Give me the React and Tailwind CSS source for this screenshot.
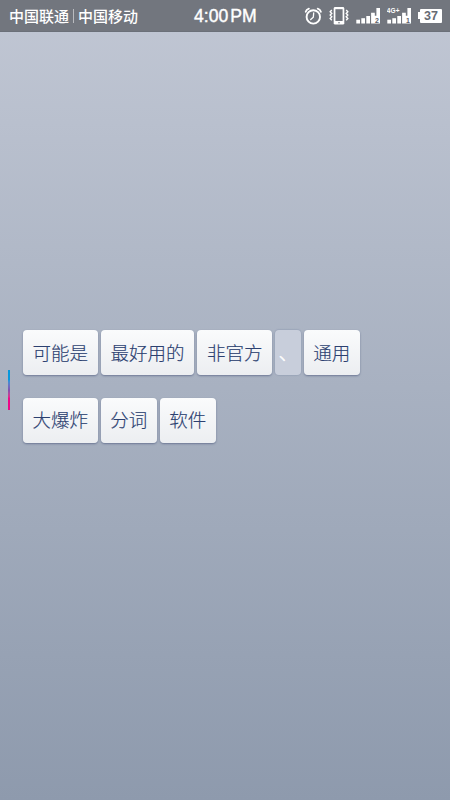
const ROWS = [
  [
    { text: '可能是', width: 'w-[75px]' },
    { text: '最好用的', width: 'w-[93.5px]' },
    { text: '非官方', width: 'w-[75px]' },
    { text: '、', width: 'w-[25.5px]', dim: true },
    { text: '通用', width: 'w-[56px]' },
  ],
  [
    { text: '大爆炸', width: 'w-[75px]' },
    { text: '分词', width: 'w-[56px]' },
    { text: '软件', width: 'w-[56px]' },
  ],
];

function AlarmIcon() {
  return (
    <svg width="18" height="18" viewBox="0 0 18 18" fill="none" stroke="#fff" className="shrink-0">
      <circle cx="9.3" cy="9.9" r="6.7" strokeWidth="1.9" />
      <path d="M9.7 6 9.3 10.2 6.7 12.6" strokeWidth="1.3" strokeLinecap="round" />
      <path d="M1.7 4.8Q2.3 2.4 4.9 1.6M13.7 1.6Q16.3 2.4 16.9 4.8" strokeWidth="1.8" strokeLinecap="round" />
    </svg>
  );
}

function VibrateIcon() {
  return (
    <svg width="20" height="20" viewBox="0 0 20 20" fill="none" stroke="#fff" className="shrink-0">
      <rect x="4.7" y="1" width="10.6" height="17.6" rx="1.4" fill="#fff" stroke="none" />
      <rect x="6.4" y="3.2" width="7.2" height="11.8" fill="#72767e" stroke="none" />
      <circle cx="10" cy="16.8" r="0.8" fill="#72767e" stroke="none" />
      <path d="M2.8 4 1.2 5.7 2.8 7.4 1.2 9.1 2.8 10.8 1.2 12.5 2.8 14.2" strokeWidth="1.4" />
      <path d="M17.2 4 18.8 5.7 17.2 7.4 18.8 9.1 17.2 10.8 18.8 12.5 17.2 14.2" strokeWidth="1.4" />
    </svg>
  );
}

// Signal strength bars, the last one carries the SIM slot number
function SignalIcon({ slot, network }) {
  return (
    <svg width="25" height="18" viewBox="0 0 25 18" fill="#fff" className="shrink-0">
      <rect x="0.3" y="12.7" width="3.7" height="3.8" />
      <rect x="5.3" y="11.2" width="3.7" height="5.3" />
      <rect x="10.3" y="9" width="3.7" height="7.5" />
      <path d="M15.1 5.8H18.8V8.8H20.4V1H24V16.5H15.1Z" />
      {network && <text x="-0.3" y="5.8" fontSize="6.5" fontWeight="700" letterSpacing="0.2">{network}</text>}
      <text x="19" y="15.6" fontSize="7" fontWeight="700" fill="#5d616a">{slot}</text>
    </svg>
  );
}

function Battery({ level }) {
  return (
    <div className="flex items-center">
      <span className="h-[7px] w-[2px] bg-white" />
      <span className="flex h-[14px] w-[22px] items-center justify-center rounded-[1px] bg-white pt-px text-[12.5px] font-bold leading-none text-[#666a73]">
        {level}
      </span>
    </div>
  );
}

function SignalGroup() {
  return (
    <div className="flex items-center">
      <AlarmIcon />
      <span className="ml-[7px] flex"><VibrateIcon /></span>
      <span className="ml-[7px] flex"><SignalIcon slot="2" /></span>
      <span className="ml-[6px] flex"><SignalIcon slot="1" network="4G+" /></span>
      <span className="ml-[6px] flex"><Battery level={37} /></span>
    </div>
  );
}

function StatusBar() {
  return (
    <header className="flex h-8 items-center border-b border-[#6b7079] bg-[#72767e] text-white">
      <div className="flex w-[194px] items-center pl-[9px] text-[15px] font-medium leading-none">
        <span className="pt-[2px]">中国联通</span>
        <span className="ml-[4px] mr-[4px] h-[14px] w-px bg-white/50" />
        <span className="pt-[2px]">中国移动</span>
      </div>
      <span className="w-[110px] whitespace-nowrap pt-[3px] text-[17.6px] font-medium leading-none [-webkit-text-stroke:0.4px_white]">
        4:00<span className="ml-[2px]">PM</span>
      </span>
      <SignalGroup />
    </header>
  );
}

function Word({ text, width, dim }) {
  const look = dim
    ? 'bg-[#c8cedb] text-white shadow-[0_0_1px_1px_rgba(130,142,170,0.35)] [-webkit-text-stroke:0.5px_white]'
    : 'bg-linear-to-b from-[#fafbfc] to-[#eceef1] text-[#2b4070] shadow-[0_1px_2px_rgba(70,84,120,0.6)] [-webkit-text-stroke:0.15px_#2b4070]';
  return (
    <button className={`flex h-[45px] shrink-0 items-center justify-center rounded-[4px] pt-[2px] text-[18.5px] font-light leading-none ${width} ${look}`}>
      {text}
    </button>
  );
}

export default function App() {
  return (
    <div className="flex h-[800px] w-[450px] flex-col overflow-hidden bg-linear-to-b from-[#c1c7d4] to-[#8e9aad] font-['Liberation_Sans','Noto_Sans_CJK_SC',sans-serif]">
      <StatusBar />
      <main className="flex pt-[298.4px]">
        <span className="ml-[8px] mt-[40px] h-[40px] w-[2px] bg-linear-to-b from-[#0797dc] from-25% via-[#8050b0] via-50% to-[#ed0788] to-70%" />
        <div className="ml-[12.7px] flex flex-col gap-[22.5px]">
          {ROWS.map((row, i) => (
            <div key={i} className="flex gap-[3px]">
              {row.map((word) => (
                <Word key={word.text} {...word} />
              ))}
            </div>
          ))}
        </div>
      </main>
    </div>
  );
}
